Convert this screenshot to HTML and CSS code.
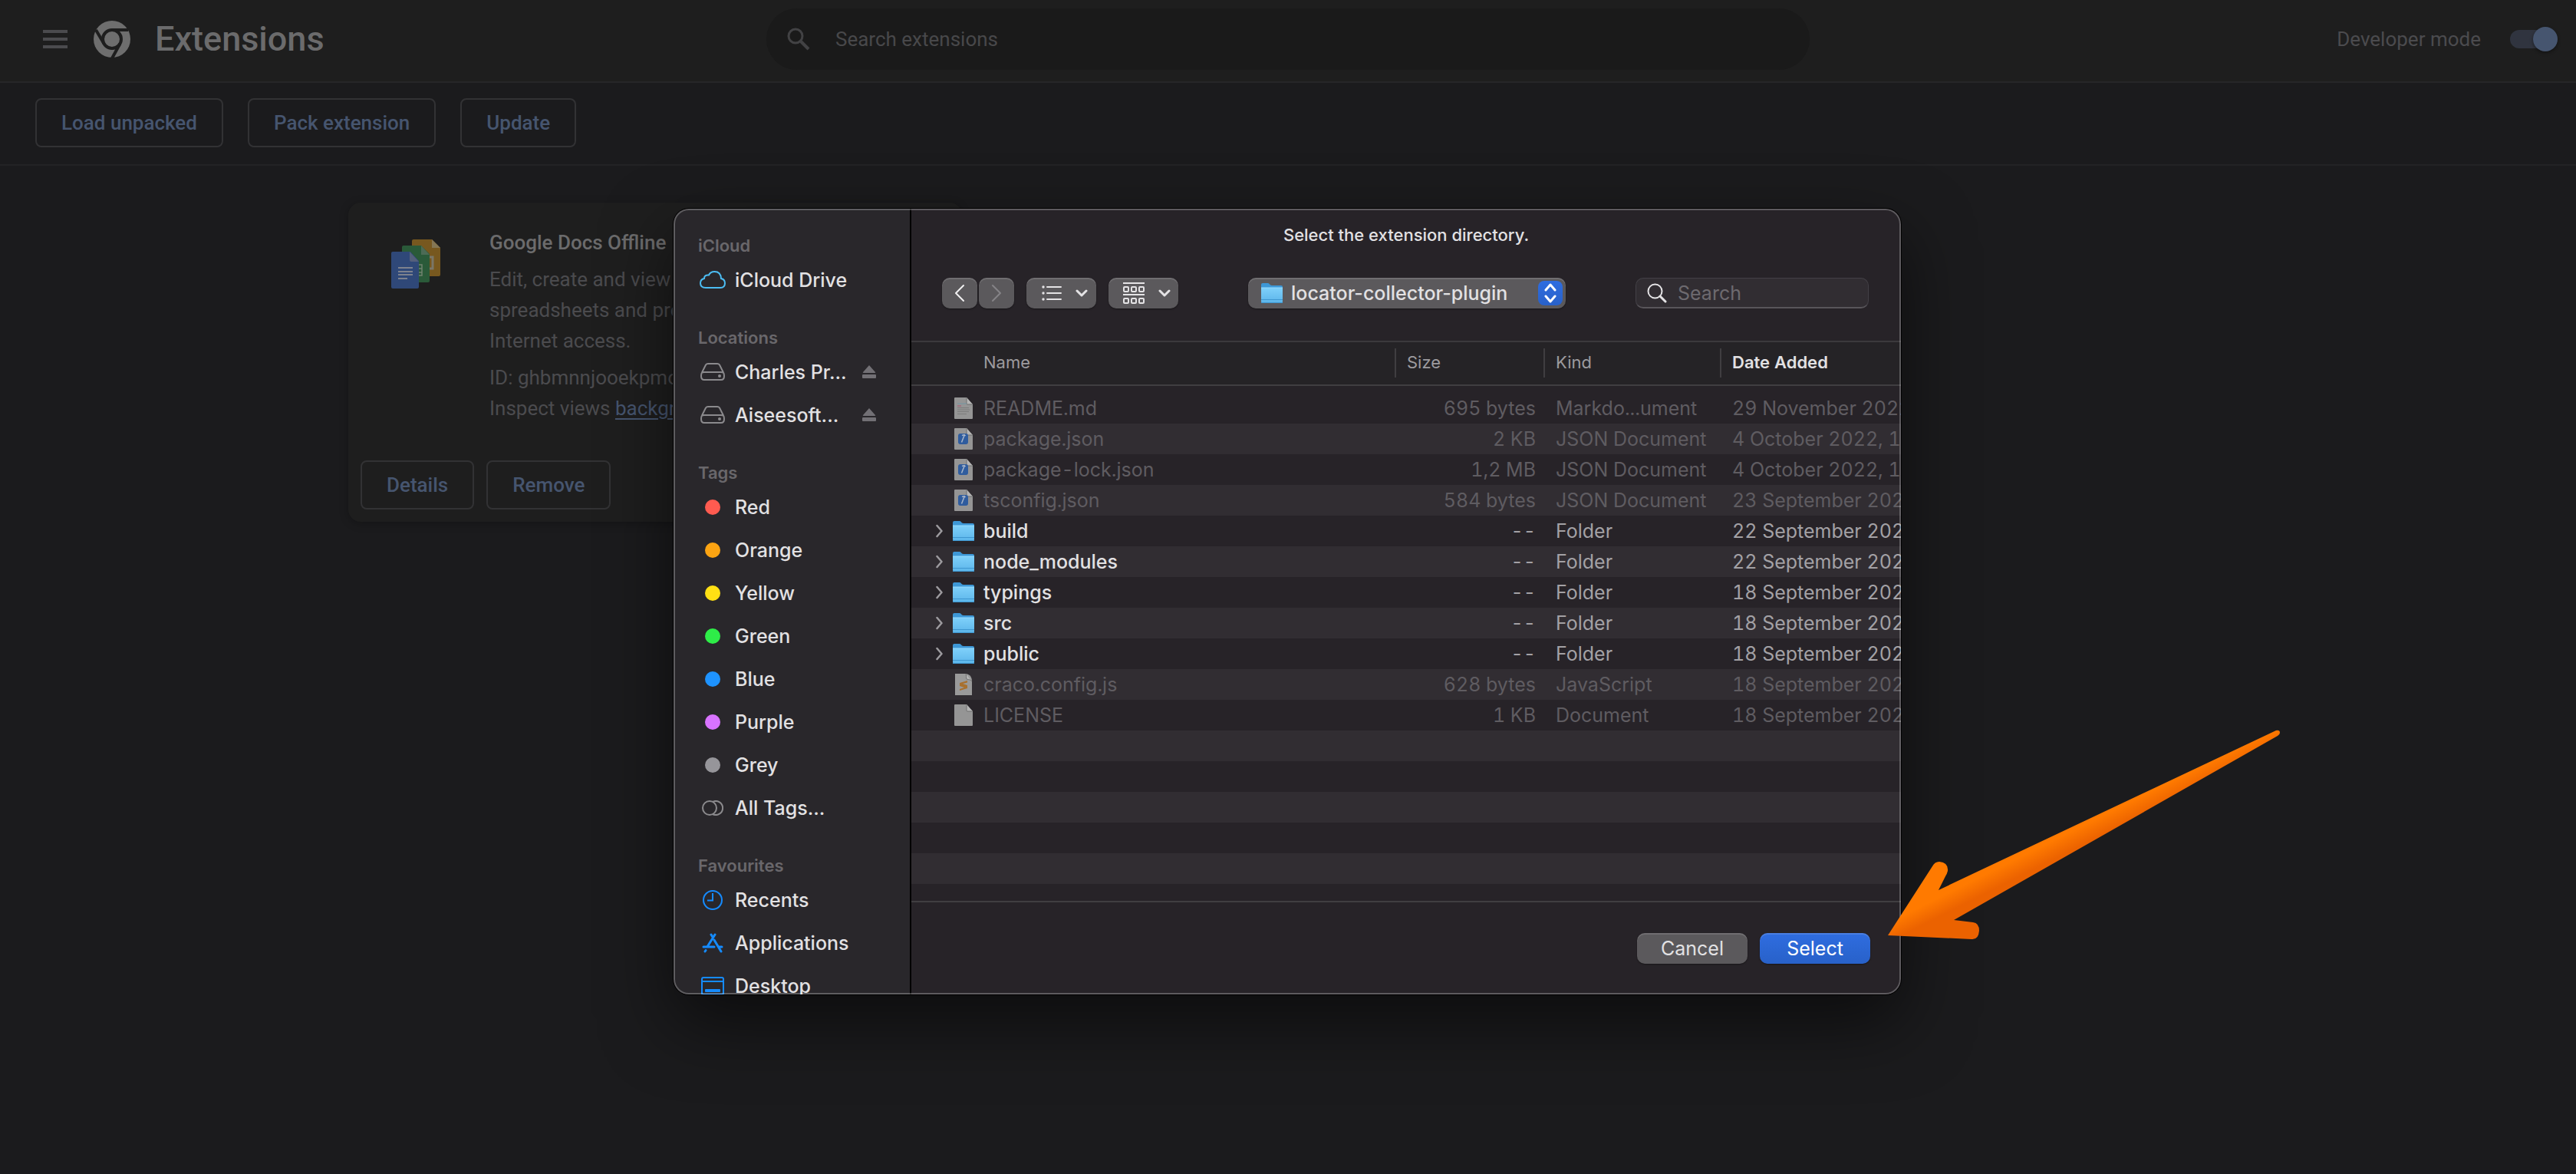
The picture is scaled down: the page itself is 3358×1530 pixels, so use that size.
FILE: index.html
```
<!DOCTYPE html>
<html lang="en">
<head>
<meta charset="utf-8">
<title>Extensions</title>
<link rel="stylesheet" href="styles.css">
</head>
<body>
<svg class="sprite" aria-hidden="true">
  <defs>
    <linearGradient id="folder-front" x1="0" y1="0" x2="0" y2="1"><stop offset="0" stop-color="#7fd0fa"/><stop offset="1" stop-color="#5bb5ea"/></linearGradient>
    <symbol id="folder" viewBox="0 0 28 28">
      <path d="M0 3a2 2 0 0 1 2-2h7c2 0 2 3 5 3h12a2 2 0 0 1 2 2v8H0z" fill="#3d97d6"/>
      <path d="M0 7h28v18a2 2 0 0 1-2 2H2a2 2 0 0 1-2-2z" fill="url(#folder-front)"/>
      <path d="M0 7h28" stroke="#97dcff"/>
      <path d="M0 22.500h28M0 26.500h28" stroke="#3f97d0"/>
    </symbol>
    <symbol id="page" viewBox="0 0 24 28">
      <path d="M1 0h15l8 9v18a1 1 0 0 1-1 1H1a1 1 0 0 1-1-1V1a1 1 0 0 1 1-1z" fill="#959595"/>
      <path d="M16 0l8 9h-7a1 1 0 0 1-1-1z" fill="#b5b5b5"/>
      <path d="M16 0v8a1 1 0 0 0 1 1h7" fill="none" stroke="#6e6e6e"/>
    </symbol>
    <symbol id="json" viewBox="0 0 24 28">
      <use href="#page"/>
      <rect x="5" y="7" width="13" height="14" rx="3" fill="#2f5c9e"/>
      <path d="M9.500 18.500l3.500-9M10 9.500l3-1 1.500 1.500" fill="none" stroke="#a9b6c9" stroke-width="1.500"/>
    </symbol>
    <symbol id="markdown" viewBox="0 0 24 28">
      <use href="#page"/>
      <path d="M4 8h12" stroke="#7395a3"/><path d="M4 11h5" stroke="#a9506f"/>
      <path d="M4 13.500h15M4 16h16M4 18.500h15M4 21.500h12" stroke="#7c7c7c"/>
    </symbol>
    <symbol id="script" viewBox="0 0 24 28">
      <path d="M1 0h14c6 1 8 5 8 10v18H1z" fill="#9a9a9a"/>
      <path d="M15 0c1 2 0 5 1 7 2 1 5 0 7 3" fill="#b5b5b5" stroke="#6e6e6e"/>
      <path d="M17 9l-10 3v4l6 2-6 2v2l10-3v-4l-6-2 6-1.500z" fill="#a8702e"/>
    </symbol>
    <symbol id="disk" viewBox="0 0 32 24">
      <path d="M7 2.500Q8 1 10 1h12q2 0 3 1.500l5 10Q31 14 31 17q0 5-4 5H5q-4 0-4-5 0-3 1-4.500zM2 12.500Q3 12 5 12h22q2 0 3 .500" fill="none" stroke="#8b8a8d" stroke-width="2"/>
      <circle cx="25" cy="17" r="2" fill="#8b8a8d"/>
    </symbol>
    <symbol id="eject" viewBox="0 0 18 18">
      <path d="M9 0l8 9q1 1-1 1H2q-2 0-1-1z" fill="#727075"/><rect y="12" width="18" height="5" rx="1" fill="#727075"/>
    </symbol>
    <symbol id="disclose" viewBox="0 0 10 18">
      <path d="M1.500 2l6 7-6 7" fill="none" stroke="#9d9b9f" stroke-width="2.500" stroke-linecap="round" stroke-linejoin="round"/>
    </symbol>
    <symbol id="caret" viewBox="0 0 16 10">
      <path d="M2 2l6 6 6-6" fill="none" stroke="#e4e3e5" stroke-width="3" stroke-linecap="round" stroke-linejoin="round"/>
    </symbol>
  </defs>
</svg>

<header class="topbar">
  <div class="brand">
    <button class="menu-button" aria-label="Main menu">
      <svg width="32" height="24" viewBox="0 0 32 24"><path d="M0 2h32M0 12h32M0 22h32" stroke="#4b4b4e" stroke-width="4"/></svg>
    </button>
    <svg class="chrome-logo" width="48" height="48" viewBox="0 0 48 48">
      <circle cx="24" cy="24" r="24" fill="#6e6e6e"/>
      <circle cx="24" cy="24" r="12" fill="none" stroke="#1e1e1e" stroke-width="4"/>
      <path d="M24 12h21M13.600 30L3 12M34.400 30L24 49" stroke="#1e1e1e" stroke-width="4"/>
    </svg>
    <h1>Extensions</h1>
  </div>
  <label class="search">
    <svg width="32" height="32" viewBox="0 0 32 32"><g fill="none" stroke="#424244" stroke-width="3"><circle cx="12" cy="12" r="9"/><path d="M19 19l10 10" stroke-width="4"/></g></svg>
    <input type="search" placeholder="Search extensions" aria-label="Search extensions">
  </label>
  <div class="dev-mode">
    <label for="dev">Developer mode</label>
    <input id="dev" class="toggle" type="checkbox" checked>
  </div>
</header>

<div class="toolbar">
  <button class="outline">Load unpacked</button>
  <button class="outline">Pack extension</button>
  <button class="outline">Update</button>
</div>

<main class="cards">
  <article class="card">
    <div class="card-body">
      <svg class="docs-logo" width="64" height="64" viewBox="0 0 64 64">
        <path d="M29 0h24l11 11v35a2 2 0 0 1-2 2H29a2 2 0 0 1-2-2V2a2 2 0 0 1 2-2z" fill="#77581f"/><path d="M53 0l11 11H53z" fill="#847654"/>
        <rect x="42" y="23" width="12" height="15" fill="none" stroke="#7b7768" stroke-width="3"/>
        <path d="M16 8h23l11 11v35a2 2 0 0 1-2 2H16a2 2 0 0 1-2-2V10a2 2 0 0 1 2-2z" fill="#2a5a39"/><path d="M39 8l11 12H39z" fill="#4c6b55"/>
        <path d="M28 33h12v14H28M28 38h12M28 43h12" fill="none" stroke="#70836f" stroke-width="1.500"/>
        <path d="M2 16h23l11 12v34a2 2 0 0 1-2 2H2a2 2 0 0 1-2-2V18a2 2 0 0 1 2-2z" fill="#2f4878"/><path d="M24 16l12 13H26a2 2 0 0 1-2-2z" fill="#54607c"/>
        <path d="M9 37h19M9 42h19M9 46h19M9 51h12" stroke="#7d828e" stroke-width="2"/>
      </svg>
      <div class="card-text">
        <h2>Google Docs Offline</h2>
        <p>Edit, create and view your documents, spreadsheets and presentations — all without Internet access.</p>
        <div>ID: ghbmnnjooekpmoecnnnilnnbdlolhkhi</div>
        <div>Inspect views <a href="#">background page (Inactive)</a></div>
      </div>
    </div>
    <div class="card-actions">
      <button class="outline">Details</button>
      <button class="outline">Remove</button>
    </div>
  </article>
</main>

<div class="modal-layer">
  <div class="modal-wrap">
    <section class="dialog" role="dialog" aria-label="Select the extension directory.">
      <nav class="sidebar">
        <h3>iCloud</h3>
        <ul>
          <li><svg width="34" height="24" viewBox="0 0 34 24"><path d="M8 22q-7 0-7-6 0-5 5-6Q6 5 12 5.500 14 1 19.500 1q8 0 8.500 9 5 1 5 6 0 6-6 6z" fill="none" stroke="#4cbdf3" stroke-width="2"/></svg>iCloud Drive</li>
        </ul>
        <h3>Locations</h3>
        <ul>
          <li><svg width="32" height="24"><use href="#disk"/></svg>Charles Pr...<svg class="eject" width="18" height="18"><use href="#eject"/></svg></li>
          <li><svg width="32" height="24"><use href="#disk"/></svg>Aiseesoft...<svg class="eject" width="18" height="18"><use href="#eject"/></svg></li>
        </ul>
        <h3>Tags</h3>
        <ul>
          <li><i class="dot red"></i>Red</li>
          <li><i class="dot orange"></i>Orange</li>
          <li><i class="dot yellow"></i>Yellow</li>
          <li><i class="dot green"></i>Green</li>
          <li><i class="dot blue"></i>Blue</li>
          <li><i class="dot purple"></i>Purple</li>
          <li><i class="dot grey"></i>Grey</li>
          <li><svg width="28" height="20" viewBox="0 0 28 20"><g fill="none" stroke="#8b8a8d" stroke-width="2"><circle cx="10" cy="10" r="9"/><path d="M14 2a9 9 0 1 1 0 16"/></g></svg>All Tags...</li>
        </ul>
        <h3>Favourites</h3>
        <ul>
          <li><svg width="26" height="26" viewBox="0 0 26 26"><g fill="none" stroke="#158bff" stroke-width="2"><circle cx="13" cy="13" r="12"/><path d="M13 4v9.500H6"/></g></svg>Recents</li>
          <li><svg width="28" height="26" viewBox="0 0 28 26"><g fill="none" stroke="#158bff" stroke-width="3" stroke-linecap="round"><path d="M12 2l1.500 2.500M17 2L7.500 17M16 9l9 15M2 18h14M22 18h4M5 22.500L4 24"/></g></svg>Applications</li>
          <li><svg width="30" height="24" viewBox="0 0 30 24"><rect x="1" y="1" width="28" height="22" rx="2" fill="none" stroke="#158bff" stroke-width="2"/><path d="M1 6h28" stroke="#158bff" stroke-width="2"/><rect x="5" y="16" width="20" height="4" rx="1" fill="#158bff"/></svg>Desktop</li>
        </ul>
      </nav>

      <div class="browser">
        <h2 class="dialog-title">Select the extension directory.</h2>
        <div class="controls">
          <div class="nav-buttons">
            <button class="mac-button" aria-label="Back"><svg width="14" height="24" viewBox="0 0 14 24"><path d="M12 2L2 12l10 10" fill="none" stroke="#f0eff1" stroke-width="2" stroke-linecap="round" stroke-linejoin="round"/></svg></button>
            <button class="mac-button" aria-label="Forward" disabled><svg width="14" height="24" viewBox="0 0 14 24"><path d="M2 2l10 10L2 22" fill="none" stroke="#858387" stroke-width="2" stroke-linecap="round" stroke-linejoin="round"/></svg></button>
          </div>
          <button class="mac-button view" aria-label="List view">
            <svg width="26" height="20" viewBox="0 0 26 20"><g stroke="#e4e3e5" stroke-width="2" stroke-linecap="round"><path d="M7 2h18M7 10h18M7 18h18"/></g><g fill="#e4e3e5"><circle cx="2" cy="2" r="1.700"/><circle cx="2" cy="10" r="1.700"/><circle cx="2" cy="18" r="1.700"/></g></svg>
            <svg width="16" height="10"><use href="#caret"/></svg>
          </button>
          <button class="mac-button view" aria-label="Group by">
            <svg width="28" height="28" viewBox="0 0 28 28"><g fill="none" stroke="#e4e3e5" stroke-width="2"><path d="M0 1h28M0 16h28"/><rect x="1" y="6" width="6" height="6" rx="1"/><rect x="11" y="6" width="6" height="6" rx="1"/><rect x="21" y="6" width="6" height="6" rx="1"/><rect x="1" y="21" width="6" height="6" rx="1"/><rect x="11" y="21" width="6" height="6" rx="1"/><rect x="21" y="21" width="6" height="6" rx="1"/></g></svg>
            <svg width="16" height="10"><use href="#caret"/></svg>
          </button>
          <div class="popup">
            <svg class="popup-icon" width="28" height="28"><use href="#folder"/></svg>
            <select aria-label="Folder"><option>locator-collector-plugin</option></select>
            <span class="stepper"><svg width="16" height="28" viewBox="0 0 16 28"><path d="M2 10l6-7 6 7M2 18l6 7 6-7" fill="none" stroke="#fff" stroke-width="3" stroke-linecap="round" stroke-linejoin="round"/></svg></span>
          </div>
          <label class="file-search">
            <svg width="26" height="26" viewBox="0 0 26 26"><g fill="none" stroke="#e4e3e5" stroke-width="2"><circle cx="10.500" cy="10.500" r="9"/><path d="M17 17l7 7" stroke-width="3" stroke-linecap="round"/></g></svg>
            <input type="search" placeholder="Search" aria-label="Search">
          </label>
        </div>

        <div class="file-list">
          <table>
            <colgroup><col class="c-name"><col class="c-size"><col class="c-kind"><col></colgroup>
            <thead><tr><th>Name</th><th>Size</th><th>Kind</th><th class="sorted">Date Added</th></tr></thead>
            <tbody>
              <tr class="spacer"><td colspan="4"></td></tr>
              <tr class="off"><td><span class="file"><svg width="24" height="28"><use href="#markdown"/></svg>README.md</span></td><td>695 bytes</td><td>Markdo...ument</td><td>29 November 2022</td></tr>
              <tr class="off"><td><span class="file"><svg width="24" height="28"><use href="#json"/></svg>package.json</span></td><td>2 KB</td><td>JSON Document</td><td>4 October 2022, 11</td></tr>
              <tr class="off"><td><span class="file"><svg width="24" height="28"><use href="#json"/></svg>package-lock.json</span></td><td>1,2 MB</td><td>JSON Document</td><td>4 October 2022, 11</td></tr>
              <tr class="off"><td><span class="file"><svg width="24" height="28"><use href="#json"/></svg>tsconfig.json</span></td><td>584 bytes</td><td>JSON Document</td><td>23 September 2022</td></tr>
              <tr><td><span class="file folder"><svg width="10" height="18"><use href="#disclose"/></svg><svg width="28" height="28"><use href="#folder"/></svg>build</span></td><td>--</td><td>Folder</td><td>22 September 2022</td></tr>
              <tr><td><span class="file folder"><svg width="10" height="18"><use href="#disclose"/></svg><svg width="28" height="28"><use href="#folder"/></svg>node_modules</span></td><td>--</td><td>Folder</td><td>22 September 2022</td></tr>
              <tr><td><span class="file folder"><svg width="10" height="18"><use href="#disclose"/></svg><svg width="28" height="28"><use href="#folder"/></svg>typings</span></td><td>--</td><td>Folder</td><td>18 September 2022</td></tr>
              <tr><td><span class="file folder"><svg width="10" height="18"><use href="#disclose"/></svg><svg width="28" height="28"><use href="#folder"/></svg>src</span></td><td>--</td><td>Folder</td><td>18 September 2022</td></tr>
              <tr><td><span class="file folder"><svg width="10" height="18"><use href="#disclose"/></svg><svg width="28" height="28"><use href="#folder"/></svg>public</span></td><td>--</td><td>Folder</td><td>18 September 2022</td></tr>
              <tr class="off"><td><span class="file"><svg width="24" height="28"><use href="#script"/></svg>craco.config.js</span></td><td>628 bytes</td><td>JavaScript</td><td>18 September 2022</td></tr>
              <tr class="off"><td><span class="file"><svg width="24" height="28"><use href="#page"/></svg>LICENSE</span></td><td>1 KB</td><td>Document</td><td>18 September 2022</td></tr>
            </tbody>
          </table>
        </div>

        <footer class="dialog-actions">
          <button class="mac-button">Cancel</button>
          <button class="mac-button primary">Select</button>
        </footer>
      </div>
    </section>

    <svg class="pointer" width="520" height="274" viewBox="0 0 520 274" aria-hidden="true">
      <defs><linearGradient id="pointer-fill" gradientUnits="userSpaceOnUse" x1="250" y1="127" x2="260" y2="147"><stop offset="0" stop-color="#ff7a00"/><stop offset="1" stop-color="#eb6200"/></linearGradient></defs>
      <path d="M0 268L58 178Q61 172 67 172Q79 173 78 184Q77 188 75 191L66 209L506 1Q511 0 511 4Q511 6 508 8L86 248L111 251Q119 252 119 262Q118 274 109 273z" fill="url(#pointer-fill)"/>
    </svg>
  </div>
</div>
</body>
</html>
```
FILE: styles.css
```
:root {
  --page: #1b1b1d;
  --bar: #1e1e1e;
  --rule: #262628;
  --muted: #4b4b4e;
  --link: #46556f;
  --dialog: #272328;
  --stripe: #312d32;
  --control: #5b595c;
}

* { box-sizing: border-box; }

body {
  margin: 0;
  min-height: 100vh;
  position: relative;
  background: var(--page);
  color: var(--muted);
  font: 400 26px/40px Roboto, sans-serif;
}

h1, h2, h3, p, ul { margin: 0; padding: 0; }
ul { list-style: none; }
button, input, select { font: inherit; color: inherit; margin: 0; }
svg { display: block; flex: none; }
.sprite { position: absolute; width: 0; height: 0; }

/* Page header */
.topbar {
  display: grid;
  grid-template-columns: 1fr minmax(0, 1360px) 1fr;
  align-items: center;
  height: 108px;
  padding: 0 24px 4px;
  background: var(--bar);
  border-bottom: 2px solid var(--rule);
}
.brand { display: flex; align-items: center; padding-left: 32px; }
.menu-button { padding: 0; border: 0; background: none; }
.chrome-logo { margin: 0 32px 0 34px; }
.brand h1 { font-size: 45px; line-height: 52px; font-weight: 500; color: #6b6b6c; }

.search {
  display: flex;
  align-items: center;
  gap: 32px;
  height: 80px;
  padding: 0 26px;
  border-radius: 40px;
  background: #1a1a1a;
}
.search input { flex: 1; padding: 0; border: 0; outline: 0; background: none; }
.search input::placeholder { color: #48484a; opacity: 1; }

.dev-mode { display: flex; justify-content: flex-end; align-items: center; gap: 38px; }
.toggle {
  appearance: none;
  display: flex;
  align-items: center;
  width: 62px;
  height: 32px;
}
.toggle::before { content: ""; flex: 1; height: 24px; margin-right: -26px; border-radius: 12px; background: #30343f; }
.toggle::after { content: ""; width: 32px; height: 32px; border-radius: 50%; background: #46556f; box-shadow: 0 2px 4px rgba(0, 0, 0, .4); }

.toolbar {
  display: flex;
  align-items: center;
  gap: 32px;
  height: 108px;
  padding: 0 46px 2px;
  border-bottom: 2px solid #232325;
}
.outline {
  height: 64px;
  padding: 0 32px;
  border: 2px solid #323234;
  border-radius: 8px;
  background: none;
  color: var(--link);
  font-weight: 500;
}

/* Extension cards */
.cards {
  display: grid;
  grid-template-columns: repeat(3, minmax(0, 800px));
  gap: 24px;
  max-width: 2450px;
  margin: 0 auto;
  padding-top: 48px;
}
.card {
  display: flex;
  flex-direction: column;
  gap: 48px;
  padding: 32px 16px 16px;
  border-radius: 16px;
  background: var(--bar);
  box-shadow: 0 2px 12px rgba(0, 0, 0, .25);
}
.card-body { display: flex; gap: 64px; padding: 0 16px 0 40px; }
.docs-logo { margin-top: 16px; }
.card h2 { font-size: 26px; line-height: 40px; font-weight: 500; color: #6b6b6c; }
.card p { margin: 8px 0; }
.card a { color: var(--link); text-underline-offset: 4px; }
.card-actions { display: flex; gap: 16px; }

/* File picker */
.modal-layer {
  position: absolute;
  top: 272px;
  left: 0;
  right: 2px;
  display: flex;
  justify-content: center;
}
.modal-wrap { position: relative; width: 100%; max-width: 1600px; }
.dialog {
  position: relative;
  display: grid;
  grid-template-columns: 310px minmax(0, 1fr);
  max-height: 1024px;
  overflow: hidden;
  border-radius: 20px;
  background: var(--dialog);
  box-shadow: 0 0 0 1px #000, 0 36px 90px rgba(0, 0, 0, .55);
  color: #e2e1e3;
  font: 500 25px/32px Inter, sans-serif;
}
.dialog::after {
  content: "";
  position: absolute;
  inset: 0;
  border: 2px solid rgba(255, 255, 255, .25);
  border-radius: 20px;
  pointer-events: none;
}

.sidebar {
  height: 1024px;
  overflow: hidden;
  border-right: 2px solid #000;
  background: #29272b;
}
.sidebar h3 { padding: 32px 32px 0; font-size: 22px; line-height: 32px; font-weight: 600; color: #69676b; }
.sidebar li {
  display: grid;
  grid-template-columns: 38px 1fr auto;
  gap: 10px;
  align-items: center;
  height: 56px;
  padding: 2px 44px 0 32px;
}
.sidebar li > :first-child { justify-self: center; }
.dot { width: 20px; height: 20px; border-radius: 50%; }
.red { background: #ff5b50; }
.orange { background: #fca412; }
.yellow { background: #ffe014; }
.green { background: #2eed48; }
.blue { background: #1e93ff; }
.purple { background: #d873ff; }
.grey { background: #96959a; }

.browser { display: flex; flex-direction: column; height: 1024px; }
.dialog-title { padding: 18px 0; text-align: center; font-size: 22px; line-height: 32px; font-weight: 500; }
.controls {
  display: flex;
  gap: 16px;
  height: 104px;
  padding: 22px 42px 42px 40px;
}
.nav-buttons { display: flex; gap: 2px; }
.mac-button {
  display: flex;
  align-items: center;
  justify-content: center;
  height: 40px;
  padding: 0;
  border: 0;
  border-radius: 10px;
  background: var(--control);
  box-shadow: inset 0 2px 0 rgba(255, 255, 255, .13), 0 1px 2px rgba(0, 0, 0, .4);
}
.nav-buttons .mac-button { width: 46px; }
.view { gap: 18px; width: 91px; padding-left: 8px; }

.popup {
  position: relative;
  width: 414px;
  margin: 0 auto;
}
.popup select {
  appearance: none;
  width: 100%;
  height: 40px;
  padding: 0 50px 0 56px;
  border: 0;
  border-radius: 10px;
  background: var(--control);
  box-shadow: inset 0 2px 0 rgba(255, 255, 255, .13), 0 1px 2px rgba(0, 0, 0, .4);
}
.popup-icon { position: absolute; left: 17px; top: 6px; }
.stepper {
  position: absolute;
  right: 4px;
  top: 4px;
  display: grid;
  place-items: center;
  width: 32px;
  height: 32px;
  border-radius: 8px;
  background: linear-gradient(#2f6de0, #2861c9);
  pointer-events: none;
}
.file-search {
  display: flex;
  align-items: center;
  gap: 14px;
  width: 304px;
  height: 40px;
  padding: 0 14px;
  border: 1px solid #434046;
  border-bottom: 2px solid #58555a;
  border-radius: 10px;
  background: var(--stripe);
}
.file-search input { flex: 1; min-width: 0; padding: 0; border: 0; outline: 0; background: none; font-weight: 400; }
.file-search input::placeholder { color: #6d6a6f; opacity: 1; }

.file-list {
  flex: 1;
  min-height: 0;
  overflow: hidden;
  border-top: 2px solid #3b393c;
  border-bottom: 2px solid #403e41;
  background: repeating-linear-gradient(var(--dialog) 0 40px, var(--stripe) 40px 80px) 0 66px;
}
.file-list table { width: 100%; table-layout: fixed; border-collapse: collapse; font-weight: 400; font-variant-numeric: tabular-nums; }
.c-name { width: 632px; }
.c-size { width: 194px; }
.c-kind { width: 230px; }
.file-list th {
  height: 56px;
  padding: 0 14px 4px;
  background: linear-gradient(#403e41, #403e41) right 8px / 2px 38px no-repeat, #252326;
  border-bottom: 2px solid #403e41;
  text-align: left;
  font-size: 22px;
  line-height: 32px;
  font-weight: 400;
  color: #9d9b9f;
}
.file-list th:first-child { padding-left: 94px; }
.file-list th.sorted { font-weight: 600; color: #e2e1e3; background: #252326; }
.file-list td { height: 40px; padding: 0 14px; overflow: hidden; white-space: nowrap; color: #a3a1a5; }
.file-list .spacer td { height: 10px; background: var(--dialog); }
.file-list td:first-child { padding-left: 56px; color: #e2e1e3; font-weight: 500; }
.file-list td:nth-child(2) { text-align: right; padding-right: 12px; }
.file-list .off td { color: #5f5c61; font-weight: 400; }
.file { display: flex; align-items: center; gap: 14px; }
.folder { gap: 12px; margin-left: -24px; }

.dialog-actions { display: flex; justify-content: flex-end; gap: 16px; padding: 40px; }
.dialog-actions .mac-button { width: 144px; font-weight: 400; }
.dialog-actions .primary { background: linear-gradient(#2f6de0, #2861c9); color: #fff; }

/* Callout arrow pointing at the confirm button */
.pointer { position: absolute; left: calc(100% - 17px); bottom: 71px; }
```
